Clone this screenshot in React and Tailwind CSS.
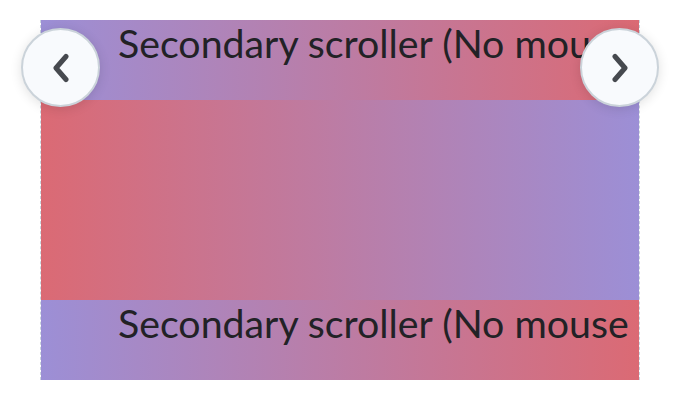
import React from "react";

function Chevron({ dir }) {
  return (
    <svg width="20" height="30" viewBox="0 0 20 30" fill="none">
      {dir === "left" ? (
        <path d="M15 3.5 L5 15 L15 26.5" stroke="#46494f" strokeWidth="5" strokeLinecap="round" strokeLinejoin="round" />
      ) : (
        <path d="M5 3.5 L15 15 L5 26.5" stroke="#46494f" strokeWidth="5" strokeLinecap="round" strokeLinejoin="round" />
      )}
    </svg>
  );
}

function Row({ from, to, h, text }) {
  return (
    <div
      className={`shrink-0 whitespace-nowrap overflow-hidden text-[39.3px] leading-[39px] text-[#222226] ${h}`}
      style={{ backgroundImage: `linear-gradient(to right, ${from}, ${to})` }}
    >
      {text && <span className="pl-[77px] pt-[3px] block">{text}</span>}
    </div>
  );
}

export default function App() {
  const P = "#9c8fd6";
  const R = "#db6a74";
  return (
    <div className="w-[680px] h-[400px] bg-white relative" style={{ fontFamily: "Lato, 'Noto Sans', sans-serif" }}>
      <div className="pt-[20px] pl-[40px]">
        <div className="w-[600px] h-[360px] border-x border-dashed border-[#c9d2dc] flex flex-col overflow-hidden">
          <Row from={P} to={R} h="h-[80px]" text="Secondary scroller (No mouse" />
          <Row from={R} to={P} h="h-[200px]" text="" />
          <Row from={P} to={R} h="h-[80px]" text="Secondary scroller (No mouse" />
        </div>
      </div>
      <button className="absolute left-[21px] top-[28px] w-[79px] h-[79px] rounded-full bg-[#f8fafd] border-2 border-[#cbd3da] shadow-[0_2px_12px_rgba(0,0,0,0.12)] flex items-center justify-center">
        <Chevron dir="left" />
      </button>
      <button className="absolute left-[580px] top-[28px] w-[79px] h-[79px] rounded-full bg-[#f8fafd] border-2 border-[#cbd3da] shadow-[0_2px_12px_rgba(0,0,0,0.12)] flex items-center justify-center">
        <Chevron dir="right" />
      </button>
    </div>
  );
}
